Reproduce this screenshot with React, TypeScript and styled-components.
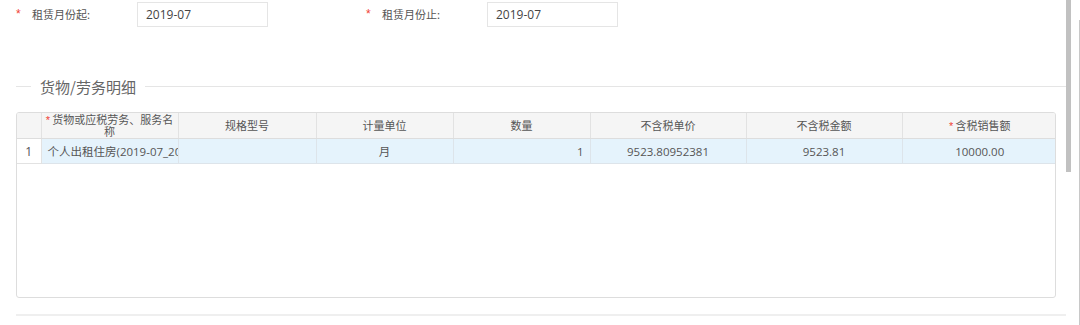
import styled, {createGlobalStyle} from "styled-components";

const GlobalStyle = createGlobalStyle`
  html, body {
    margin: 0;
    padding: 0;
    background: #fff;
    font-family: "Open Sans", "Noto Sans CJK SC", sans-serif;
    color: #333;
    overflow: hidden;
  }
`;

type Column = {
    title: string,
    width: number,
    required?: boolean,
    align: 'left' | 'center' | 'right',
}

const columns: Column[] = [
    {title: '货物或应税劳务、服务名称', width: 137, required: true, align: 'left'},
    {title: '规格型号', width: 138, align: 'center'},
    {title: '计量单位', width: 137, align: 'center'},
    {title: '数量', width: 137, align: 'right'},
    {title: '不含税单价', width: 156, align: 'center'},
    {title: '不含税金额', width: 156, align: 'center'},
    {title: '含税销售额', width: 155, required: true, align: 'center'},
];

const rows = [
    ['个人出租住房(2019-07_2019-07)', '', '月', '1', '9523.80952381', '9523.81', '10000.00'],
];

const App = () => {
    return (
        <Screen>
            <GlobalStyle/>
            <Main>
                <FormRow>
                    <FormItem>
                        <Star>*</Star>
                        <Label>租赁月份起:</Label>
                        <Input readOnly value="2019-07"/>
                    </FormItem>
                    <FormItem>
                        <Star>*</Star>
                        <Label>租赁月份止:</Label>
                        <Input readOnly value="2019-07"/>
                    </FormItem>
                </FormRow>

                <Legend>
                    <LegendLine width="15px"/>
                    <LegendText>货物/劳务明细</LegendText>
                    <LegendLine/>
                </Legend>

                <TableBox>
                    <Grid>
                        <colgroup>
                            <col style={{width: 24}}/>
                            {columns.map(c => <col key={c.title} style={{width: c.width}}/>)}
                        </colgroup>
                        <thead>
                        <tr>
                            <HeadCell/>
                            {columns.map(c => (
                                <HeadCell key={c.title}>
                                    {c.required ? <Star small>*</Star> : null}
                                    {c.title}
                                </HeadCell>
                            ))}
                        </tr>
                        </thead>
                        <tbody>
                        {rows.map((row, i) => (
                            <tr key={i}>
                                <IndexCell>{i + 1}</IndexCell>
                                {row.map((v, j) => (
                                    <BodyCell key={j} align={columns[j].align}>{v}</BodyCell>
                                ))}
                            </tr>
                        ))}
                        </tbody>
                    </Grid>
                </TableBox>

                <Divider/>
            </Main>
            <ScrollTrack>
                <ScrollThumb/>
                <EdgeLine/>
            </ScrollTrack>
        </Screen>
    )
}
export default App;

const Screen = styled.div`
  display: flex;
  width: 1080px;
  height: 325px;
`;

const Main = styled.div`
  width: 1066px;
  padding-left: 16px;
  box-sizing: border-box;
`;

const FormRow = styled.div`
  display: flex;
  height: 26px;
  padding-top: 1px;
`;

const FormItem = styled.div`
  display: flex;
  align-items: center;
  width: 350px;
`;

const Star = styled.span<{ small?: boolean }>`
  color: #f04134;
  font-size: ${props => props.small ? '11px' : '12px'};
  margin-right: ${props => props.small ? '2px' : '12px'};
  width: ${props => props.small ? 'auto' : '4px'};
  font-family: "Liberation Sans", sans-serif;
`;

const Label = styled.span`
  font-size: 11px;
  color: #555;
  width: 105px;
  font-family: "Noto Sans CJK SC", sans-serif;
`;

const Input = styled.input`
  width: 131px;
  height: 25px;
  box-sizing: border-box;
  border: 1px solid #e5e5e5;
  padding: 0 8px;
  font-size: 12px;
  color: #444;
  font-family: "Open Sans", "Noto Sans CJK SC", sans-serif;
  outline: none;
  background: #fff;
`;

const Legend = styled.div`
  display: flex;
  align-items: center;
  margin-top: 49px;
  height: 20px;
  gap: 9px;
`;

const LegendLine = styled.div<{ width?: string }>`
  height: 1px;
  background: #e5e5e5;
  ${props => props.width ? `width: ${props.width};` : 'flex: 1;'}
`;

const LegendText = styled.span`
  font-size: 15px;
  color: #666;
  font-family: "Noto Sans CJK SC", sans-serif;
`;

const TableBox = styled.div`
  margin-top: 16px;
  width: 1040px;
  height: 186px;
  box-sizing: border-box;
  border: 1px solid #ddd;
  border-radius: 3px;
  overflow: hidden;
`;

const Grid = styled.table`
  border-collapse: collapse;
  table-layout: fixed;
  width: 1038px;
`;

const HeadCell = styled.th`
  height: 25px;
  background: #f5f5f5;
  border-right: 1px solid #e2e2e2;
  border-bottom: 1px solid #ddd;
  font-weight: normal;
  font-size: 11px;
  line-height: 11px;
  color: #555;
  padding: 0 1px;
  text-align: center;
  font-family: "Noto Sans CJK SC", sans-serif;

  &:last-child {
    border-right: none;
  }
`;

const IndexCell = styled.td`
  height: 24px;
  background: #fff;
  border-right: 1px solid #e2e2e2;
  border-bottom: 1px solid #e2e2e2;
  font-size: 12px;
  color: #555;
  text-align: center;
  padding: 0;
`;

const BodyCell = styled.td<{ align: string }>`
  height: 24px;
  background: #e5f3fc;
  border-right: 1px solid #dde4ea;
  border-bottom: 1px solid #dde4ea;
  font-size: 11.5px;
  color: #555;
  text-align: ${props => props.align};
  padding: 0 6px;
  white-space: nowrap;
  overflow: hidden;
  text-overflow: clip;

  &:first-of-type {
    padding-left: 5px;
  }

  &:last-child {
    border-right: none;
  }
`;

const Divider = styled.div`
  margin-top: 16px;
  width: 1050px;
  height: 2px;
  background: #efefef;
`;

const ScrollTrack = styled.div`
  flex: 1;
  display: flex;
  justify-content: space-between;
`;

const ScrollThumb = styled.div`
  width: 5px;
  height: 172px;
  background: #c1c1c1;
`;

const EdgeLine = styled.div`
  width: 1px;
  margin-top: 20px;
  background: #c8c8c8;
`;
